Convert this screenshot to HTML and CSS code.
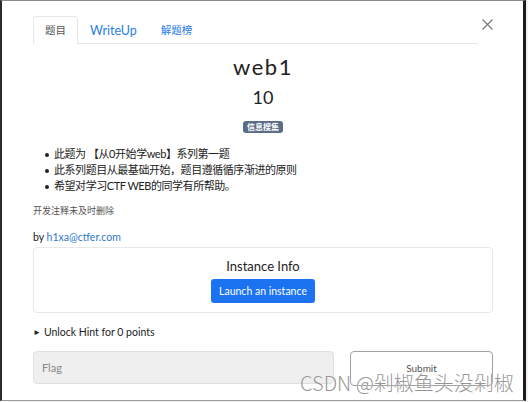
FILE: index.html
```html
<!DOCTYPE html>
<html lang="zh">
<head>
<meta charset="utf-8">
<title>web1</title>
<link rel="stylesheet" href="styles.css">
</head>
<body>
<div class="modal">
  <div class="header">
    <ul class="tabs">
      <li class="tab active cjk">题目</li>
      <li class="tab">WriteUp</li>
      <li class="tab cjk">解题榜</li>
    </ul>
    <button class="close" aria-label="Close">
      <svg width="11" height="11" viewBox="0 0 11 11"><path d="M0.5 0.5 L10.5 10.5 M10.5 0.5 L0.5 10.5" stroke="#7a7a7a" stroke-width="1.2" fill="none"/></svg>
    </button>
  </div>
  <h2 class="name">web1</h2>
  <h3 class="value">10</h3>
  <div class="tags"><span class="badge">信息搜集</span></div>
  <ul class="desc">
    <li>此题为 【从0开始学web】系列第一题</li>
    <li>此系列题目从最基础开始，题目遵循循序渐进的原则</li>
    <li>希望对学习CTF WEB的同学有所帮助。</li>
  </ul>
  <p class="note">开发注释未及时删除</p>
  <p class="author">by <a href="#">h1xa@ctfer.com</a></p>
  <div class="instance">
    <div class="instance-title">Instance Info</div>
    <button class="launch">Launch an instance</button>
  </div>
  <div class="hint"><span class="tri">&#9658;</span>Unlock Hint for 0 points</div>
  <div class="submit-row">
    <div class="flag">Flag</div>
    <button class="submit">Submit</button>
  </div>
  <div class="watermark">CSDN @剁椒鱼头没剁椒</div>
</div>
</body>
</html>
```

FILE: styles.css
```css
html, body {
  margin: 0;
  padding: 0;
  background: #f2f2f2;
}
body {
  font-family: Lato, "Noto Sans CJK SC", sans-serif;
  color: #212529;
}
.modal {
  position: relative;
  box-sizing: border-box;
  width: 526px;
  height: 401px;
  background: #fff;
  border-left: 2px solid #2a2a2a;
  border-top: 1px solid #8a8a8a;
  border-right: 3px solid #1c1c1c;
  border-bottom: 1px solid #9a9a9a;
  padding: 15px 30px 0 31px;
  overflow: hidden;
}
.header {
  display: flex;
  align-items: flex-start;
}
.tabs {
  flex: 1;
  display: flex;
  list-style: none;
  margin: 0;
  padding: 0;
  border-bottom: 1px solid #e3e6ea;
}
.tab {
  font-size: 12.5px;
  line-height: 17px;
  padding: 5px 11px 4px;
  color: #2a7de8;
  border: 1px solid transparent;
  border-bottom: none;
  border-radius: 4px 4px 0 0;
  margin-bottom: -1px;
}
.tab.cjk {
  font-size: 10.5px;
}
.tab.active {
  color: #555;
  border-color: #e3e6ea;
  background: #fff;
  padding-bottom: 5px;
}
.close {
  width: 15px;
  height: 15px;
  margin-top: 1px;
  border: none;
  background: none;
  padding: 0;
  display: flex;
  justify-content: flex-end;
  align-items: center;
}
.name {
  margin: 10px 0 0;
  text-align: center;
  font-weight: 400;
  font-size: 22px;
  line-height: 26px;
  letter-spacing: 1.5px;
  color: #222;
}
.value {
  margin: 6px 0 0;
  text-align: center;
  font-weight: 400;
  font-size: 18px;
  line-height: 22px;
  color: #222;
}
.tags {
  margin-top: 13px;
  display: flex;
  justify-content: center;
}
.badge {
  background: #5b6c86;
  color: #fff;
  font-size: 8px;
  line-height: 12px;
  height: 12px;
  padding: 0 4px;
  border-radius: 3px;
  font-weight: 700;
}
.desc {
  margin: 13px 0 0;
  padding-left: 21px;
  list-style: none;
  font-size: 11px;
  letter-spacing: -0.45px;
  line-height: 16px;
  color: #222;
}
.desc li {
  display: flex;
  align-items: center;
}
.desc li::before {
  content: "";
  flex: none;
  width: 4px;
  height: 4px;
  border-radius: 50%;
  background: #222;
  margin: 1px 5px 0 -9px;
}
.note {
  margin: 10px 0 0;
  font-size: 9px;
  line-height: 14px;
  color: #555;
  font-family: "Noto Sans CJK SC", serif;
}
.author {
  margin: 11px 0 0;
  font-size: 10.5px;
  line-height: 16px;
  color: #222;
}
.author a {
  color: #2f79c8;
  text-decoration: none;
}
.instance {
  margin-top: 2px;
  border: 1px solid #e6e8eb;
  border-radius: 4px;
  padding: 9px 0 9px;
  display: flex;
  flex-direction: column;
  align-items: center;
}
.instance-title {
  font-size: 13px;
  line-height: 18px;
  color: #222;
}
.launch {
  margin-top: 4px;
  height: 24px;
  padding: 0 8px;
  border: none;
  border-radius: 3px;
  background: #1b73f2;
  color: #fff;
  font-family: Lato, sans-serif;
  font-size: 10.5px;
}
.hint {
  margin-top: 11px;
  font-size: 10.5px;
  line-height: 16px;
  color: #222;
}
.tri {
  font-size: 8px;
  vertical-align: 1px;
  margin-right: 3px;
}
.submit-row {
  margin-top: 11px;
  display: flex;
  gap: 16px;
}
.flag {
  flex: 1;
  height: 33px;
  box-sizing: border-box;
  background: #efefef;
  border: 1px solid #e0e0e0;
  border-radius: 4px;
  padding-left: 8px;
  font-size: 11px;
  line-height: 31px;
  color: #888;
}
.submit {
  width: 143px;
  height: 35px;
  box-sizing: border-box;
  background: #fff;
  border: 1px solid #a0a0a0;
  border-radius: 4px;
  padding-bottom: 2px;
  font-family: Lato, sans-serif;
  font-size: 10px;
  color: #555;
}
.watermark {
  position: absolute;
  left: 298px;
  top: 369px;
  font-family: "Noto Sans CJK SC", sans-serif;
  font-size: 20px;
  line-height: 26px;
  font-weight: 300;
  color: rgba(130, 130, 130, 0.85);
  white-space: nowrap;
  text-shadow: 0 0 1px #fff;
}
```
